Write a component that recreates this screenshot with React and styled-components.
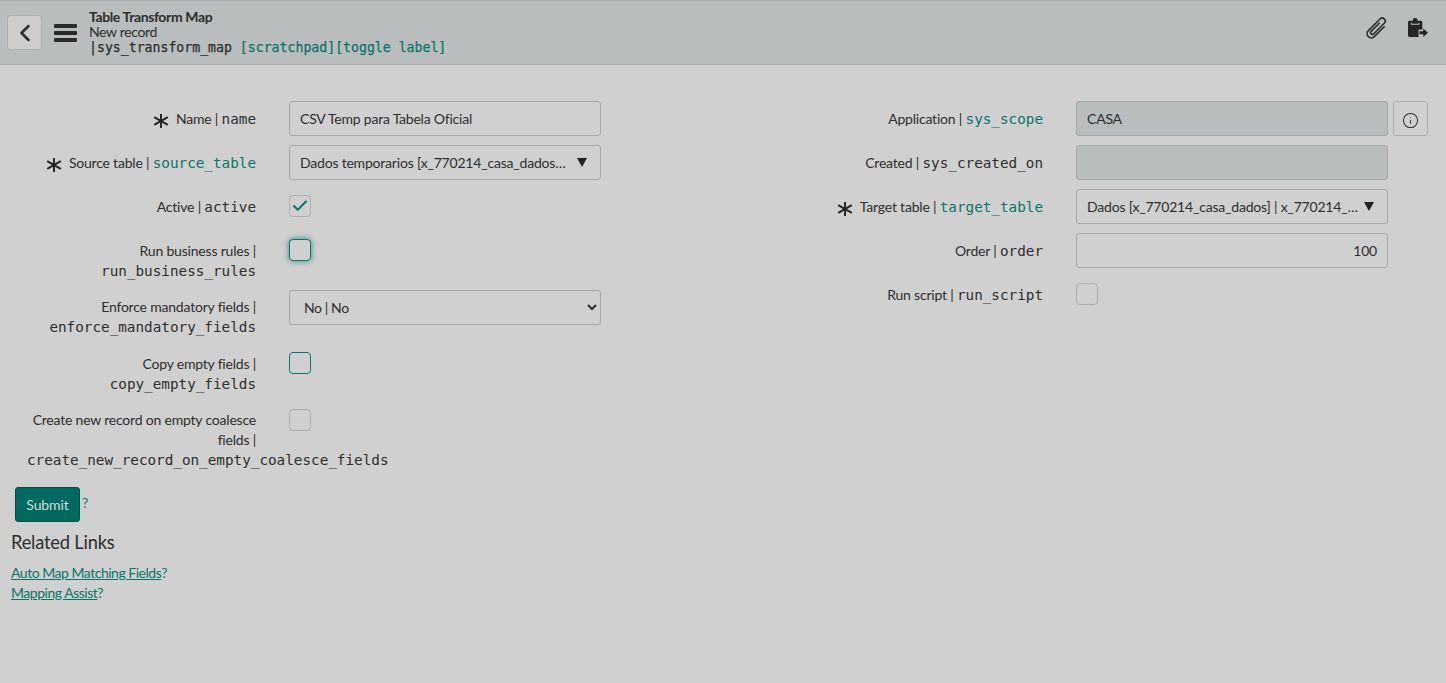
import React from "react";
import styled, { createGlobalStyle } from "styled-components";
import { ChevronLeft, Info, Check } from "lucide-react";

const sansFont = `Lato, "Noto Sans", sans-serif`;
const monoFont = `"DejaVu Sans Mono", monospace`;
const teal = "#0c7468";
const ink = "#2e2e2e";

const GlobalStyle = createGlobalStyle`
  html, body {
    margin: 0;
    padding: 0;
    background: #d0d0d0;
    color: ${ink};
    font-family: ${sansFont};
    font-size: 14px;
  }
  * {
    box-sizing: border-box;
  }
`;

const Page = styled.div`
  width: 1446px;
  height: 683px;
  overflow: hidden;
`;

const Header = styled.header`
  height: 65px;
  display: flex;
  align-items: center;
  padding: 0 18px 0 7px;
  background: #b9bdbd;
  border-top: 1px solid #a9adad;
  border-bottom: 1px solid #a9adad;
`;

const BackButton = styled.button`
  width: 35px;
  height: 35px;
  padding: 0;
  display: flex;
  align-items: center;
  justify-content: center;
  background: #cdcdcd;
  border: 1px solid #aeb0b0;
  border-radius: 3px;
  color: ${ink};
`;

const Burger = styled.div`
  width: 23px;
  margin: 0 12px;
  display: flex;
  flex-direction: column;
  gap: 3px;

  span {
    display: block;
    height: 4px;
    background: #2b2b2b;
    border-radius: 1px;
  }
`;

const TitleBlock = styled.div`
  flex: 1;
  margin-top: -1px;
`;

const Title = styled.div`
  font-size: 14px;
  line-height: 15px;
  font-weight: 700;
  letter-spacing: -0.38px;
`;

const Subtitle = styled.div`
  font-size: 14px;
  line-height: 16px;
  letter-spacing: -0.35px;
`;

const TableName = styled.div`
  font-family: ${monoFont};
  font-size: 13.2px;
  line-height: 15px;
  font-weight: 500;
  white-space: pre;
  -webkit-text-stroke: 0.25px currentColor;

  em {
    font-style: normal;
    color: ${teal};
  }
`;

const HeaderIcons = styled.div`
  display: flex;
  align-items: center;
  gap: 19px;
  margin-top: -9px;
`;

const Columns = styled.main`
  display: grid;
  grid-template-columns: 787px 1fr;
  padding-top: 36px;
`;

const Column = styled.section`
  padding-left: 27px;
`;

const Row = styled.div`
  display: flex;
  align-items: flex-start;
  min-height: 36px;
  margin-bottom: 8px;
`;

const Label = styled.label`
  flex: 0 0 229px;
  min-width: 0;
  margin-right: 33px;
  padding: ${(p) => (p.$raised ? "7px 0 1px" : "8px 0 0")};
  text-align: right;
  font-size: 14px;
  line-height: 20.3px;
  letter-spacing: -0.2px;
`;

const StarIcon = styled.svg`
  width: 16px;
  height: 16px;
  vertical-align: -5px;
  margin-right: 7px;
`;

const Field = styled.span`
  font-family: ${monoFont};
  font-size: 14.3px;
  letter-spacing: 0;
  color: ${(p) => (p.$linked ? teal : ink)};
`;

const Control = styled.div`
  display: flex;
  gap: 5px;
`;

const TextInput = styled.input`
  width: 312px;
  height: 35px;
  padding: 0 10px;
  font-family: ${sansFont};
  font-size: 14px;
  letter-spacing: -0.22px;
  color: ${ink};
  text-align: ${(p) => (p.$right ? "right" : "left")};
  background: ${(p) => (p.readOnly ? "#b9bdbd" : "#d0d0d0")};
  border: 1px solid #a6a8a8;
  border-radius: 3px;
  outline: none;
`;

const Picker = styled.div`
  width: 312px;
  height: 35px;
  display: flex;
  align-items: center;
  justify-content: space-between;
  padding: 0 13px 0 10px;
  background: #d0d0d0;
  border: 1px solid #a6a8a8;
  border-radius: 3px;
`;

const PickerText = styled.span`
  white-space: nowrap;
  letter-spacing: -0.2px;
`;

const Caret = styled.span`
  width: 0;
  height: 0;
  border-left: 5.5px solid transparent;
  border-right: 5.5px solid transparent;
  border-top: 9px solid #222;
`;

const NativeSelect = styled.select`
  width: 312px;
  height: 35px;
  padding: 0 10px;
  font-family: ${sansFont};
  font-size: 14px;
  letter-spacing: -0.4px;
  color: ${ink};
  background: #d0d0d0;
  border: 1px solid #a6a8a8;
  border-radius: 3px;
  outline: none;
`;

const CheckBox = styled.span`
  width: 22px;
  height: 22px;
  margin-top: 6px;
  display: flex;
  align-items: center;
  justify-content: center;
  color: ${teal};
  background: #d0d0d0;
  border: 1px solid ${(p) => (p.$active ? teal : "#aeb0b0")};
  border-radius: 4px;
  box-shadow: ${(p) => (p.$focus ? `0 0 5px 1px ${teal}99` : "none")};
`;

const InfoButton = styled.button`
  width: 35px;
  height: 35px;
  padding: 3px 0 0;
  display: flex;
  align-items: center;
  justify-content: center;
  color: ${ink};
  background: #d0d0d0;
  border: 1px solid #aeb0b0;
  border-radius: 3px;
`;

const SubmitRow = styled.div`
  display: flex;
  align-items: flex-start;
  gap: 2px;
  margin-top: 7px;
  padding-left: 15px;
`;

const Hint = styled.span`
  margin-top: 7px;
  font-size: 14px;
  line-height: 18px;
  color: ${teal};
`;

const SubmitButton = styled.button`
  width: 65px;
  height: 35px;
  padding: 0;
  font-family: ${sansFont};
  font-size: 14px;
  letter-spacing: -0.1px;
  color: #cfdedc;
  background: #00695f;
  border: 1px solid #0b4d46;
  border-radius: 3px;
`;

const RelatedLinks = styled.div`
  padding: 9px 0 0 11px;
`;

const RelatedTitle = styled.h2`
  margin: 0 0 10px;
  font-size: 18.3px;
  line-height: 22px;
  font-weight: 400;
  letter-spacing: -0.2px;
`;

const LinkRow = styled.div`
  font-size: 14px;
  line-height: 20px;
  letter-spacing: -0.48px;
  color: ${teal};

  a {
    color: inherit;
    text-decoration: underline;
  }
`;

const Paperclip = () => (
  <svg width="24" height="24" viewBox="0 0 24 24" fill="none" stroke="#2b2b2b" strokeWidth="1.6" strokeLinecap="round">
    <path
      transform="rotate(45 12 12)"
      d="M10.2 7 V18.5 a1.8 1.8 0 0 0 3.6 0 V3.5 a3 3 0 0 0 -6 0 V20 a4.2 4.2 0 0 0 8.4 0 V6"
    />
  </svg>
);

const ClipboardArrow = () => (
  <svg width="20" height="20" viewBox="0 0 21 21">
    <path
      fill="#262626"
      fillRule="evenodd"
      d="M1.5 3 H5 V2 a2.5 2 0 0 1 5 0 V3 H13.5 a1.5 1.5 0 0 1 1.5 1.5 V12 H12 a1 1 0 0 0 -1 1 V19 a1 1 0 0 0 .3 .7 V20 H1.5 A1.5 1.5 0 0 1 0 18.5 V4.5 A1.5 1.5 0 0 1 1.5 3 Z M3 5 V7 H12 V5 H11 V6 H4 V5 Z"
    />
    <path fill="#262626" d="M12 14 H16 V11 L21 15.5 L16 20 V17 H12 Z" />
  </svg>
);

const Star = () => (
  <StarIcon viewBox="0 0 16 16" fill="none" stroke="#222" strokeWidth="1.9">
    <path d="M8 1 V15 M1.2 4.2 L14.8 11.8 M14.8 4.2 L1.2 11.8" />
  </StarIcon>
);

const Code = ({ linked, children }) => <Field $linked={linked}>{children}</Field>;

export default function App() {
  return (
    <Page>
      <GlobalStyle />
      <Header>
        <BackButton aria-label="Back">
          <ChevronLeft size={28} strokeWidth={2.2} />
        </BackButton>
        <Burger>
          <span />
          <span />
          <span />
        </Burger>
        <TitleBlock>
          <Title>Table Transform Map</Title>
          <Subtitle>New record</Subtitle>
          <TableName>
            |sys_transform_map <em>[scratchpad][toggle label]</em>
          </TableName>
        </TitleBlock>
        <HeaderIcons>
          <Paperclip />
          <ClipboardArrow />
        </HeaderIcons>
      </Header>

      <Columns>
        <Column>
          <Row>
            <Label>
              <Star />
              Name | <Code>name</Code>
            </Label>
            <TextInput defaultValue="CSV Temp para Tabela Oficial" />
          </Row>
          <Row>
            <Label>
              <Star />
              Source table | <Code linked>source_table</Code>
            </Label>
            <Picker>
              <PickerText>Dados temporarios [x_770214_casa_dados…</PickerText>
              <Caret />
            </Picker>
          </Row>
          <Row>
            <Label>
              Active | <Code>active</Code>
            </Label>
            <CheckBox>
              <Check size={18} strokeWidth={2.8} />
            </CheckBox>
          </Row>
          <Row>
            <Label>
              Run business rules | <Code>run_business_rules</Code>
            </Label>
            <CheckBox $active $focus />
          </Row>
          <Row>
            <Label $raised>
              Enforce mandatory fields | <Code>enforce_mandatory_fields</Code>
            </Label>
            <NativeSelect defaultValue="no">
              <option value="no">No | No</option>
              <option value="yes">Yes | Yes</option>
            </NativeSelect>
          </Row>
          <Row>
            <Label>
              Copy empty fields | <Code>copy_empty_fields</Code>
            </Label>
            <CheckBox $active />
          </Row>
          <Row>
            <Label $raised>
              Create new record on empty coalesce fields | <Code>create_new_record_on_empty_coalesce_fields</Code>
            </Label>
            <CheckBox />
          </Row>
        </Column>

        <Column>
          <Row>
            <Label>
              Application | <Code linked>sys_scope</Code>
            </Label>
            <Control>
              <TextInput readOnly defaultValue="CASA" />
              <InfoButton aria-label="Info">
                <Info size={17} strokeWidth={1.5} />
              </InfoButton>
            </Control>
          </Row>
          <Row>
            <Label>
              Created | <Code>sys_created_on</Code>
            </Label>
            <TextInput readOnly />
          </Row>
          <Row>
            <Label>
              <Star />
              Target table | <Code linked>target_table</Code>
            </Label>
            <Picker>
              <PickerText>Dados [x_770214_casa_dados] | x_770214_…</PickerText>
              <Caret />
            </Picker>
          </Row>
          <Row>
            <Label>
              Order | <Code>order</Code>
            </Label>
            <TextInput $right defaultValue="100" />
          </Row>
          <Row>
            <Label>
              Run script | <Code>run_script</Code>
            </Label>
            <CheckBox />
          </Row>
        </Column>
      </Columns>

      <SubmitRow>
        <SubmitButton>Submit</SubmitButton>
        <Hint>?</Hint>
      </SubmitRow>

      <RelatedLinks>
        <RelatedTitle>Related Links</RelatedTitle>
        <LinkRow>
          <a href="#auto">Auto Map Matching Fields</a>?
        </LinkRow>
        <LinkRow>
          <a href="#assist">Mapping Assist</a>?
        </LinkRow>
      </RelatedLinks>
    </Page>
  );
}
